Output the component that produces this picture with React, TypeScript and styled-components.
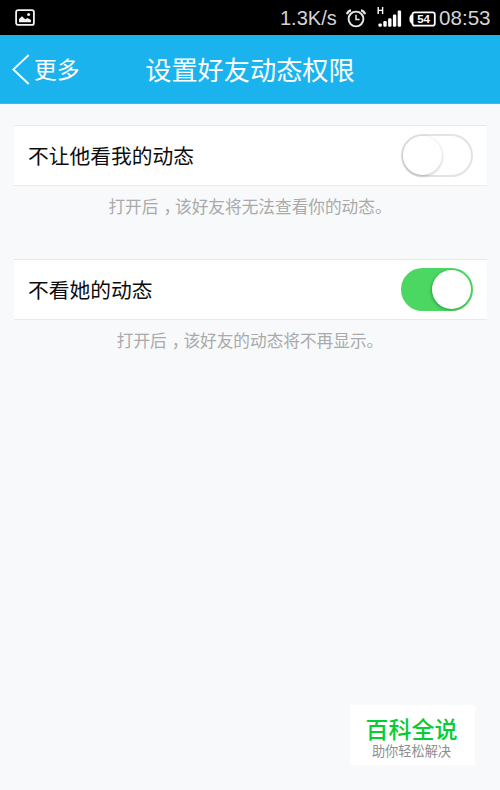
import React from 'react';
import styled, { createGlobalStyle } from 'styled-components';

const GlobalStyle = createGlobalStyle`
  * { box-sizing: border-box; }
  html, body { margin: 0; padding: 0; background: #f7f9fb; }
  body { font-family: "Noto Sans CJK SC", sans-serif; }
`;

const Screen = styled.div`
  width: 500px;
  height: 790px;
  display: flex;
  flex-direction: column;
  overflow: hidden;
  background: #f7f9fb;
`;

const StatusBar = styled.div`
  height: 35px;
  flex: none;
  display: flex;
  align-items: center;
  background: #000;
  color: #d4d4d4;
  padding: 0 8px 0 15px;

  svg { display: block; flex: none; }
`;

const StatusText = styled.span<{ $width: number; $size?: number }>`
  display: block;
  width: ${p => p.$width}px;
  padding-top: 1px;
  font: 400 ${p => p.$size ?? 20}px/32px "Liberation Sans", sans-serif;
  white-space: nowrap;
`;

const StatusGroup = styled.div`
  margin-left: auto;
  display: flex;
  align-items: center;
`;

const NavBar = styled.header`
  height: 69px;
  flex: none;
  display: grid;
  grid-template-columns: 100px 1fr 100px;
  align-items: center;
  background: #1ab3ee;
  border-bottom: 1px solid #38bbee;
  color: #fff;
`;

const BackButton = styled.button`
  display: flex;
  align-items: center;
  gap: 4px;
  padding: 0 0 0 12px;
  border: 0;
  background: none;
  color: inherit;
  font: 400 22.8px/34px "Noto Sans CJK SC", sans-serif;
  white-space: nowrap;
`;

const Title = styled.h1`
  margin: 0;
  text-align: center;
  font-size: 26.2px;
  line-height: 40px;
  font-weight: 400;
  white-space: nowrap;
`;

const Settings = styled.main`
  flex: 1;
  display: flex;
  flex-direction: column;
  gap: 31px;
  padding: 21px 13px 0 14px;
`;

const Setting = styled.section`
  height: 103px;
`;

const Row = styled.div`
  height: 61px;
  display: flex;
  align-items: center;
  justify-content: space-between;
  padding: 0 14px;
  background: #fff;
  border-top: 1px solid #e5e7e9;
  border-bottom: 1px solid #e8eaec;
`;

const Label = styled.span`
  padding-bottom: 1px;
  color: #0c0c0c;
  font-size: 20.75px;
  line-height: 30px;
`;

const Hint = styled.p`
  margin: 7px 0 0;
  padding-right: 1px;
  text-align: center;
  color: #aaa;
  font-size: 16.67px;
  line-height: 26px;
  white-space: nowrap;
`;

const Comma = styled.span`
  display: inline-block;
  width: 1em;
  padding-left: 5px;
  text-align: left;
  font-feature-settings: "halt";
`;

const Track = styled.button<{ $on: boolean }>`
  width: 72px;
  height: 43px;
  display: flex;
  align-items: center;
  justify-content: ${p => (p.$on ? 'flex-end' : 'flex-start')};
  padding: 0;
  border: 2px solid ${p => (p.$on ? '#4cd763' : '#e3e3e3')};
  border-radius: 22px;
  background: ${p => (p.$on ? '#4cd763' : '#fff')};
`;

const Thumb = styled.span<{ $on: boolean }>`
  width: 39px;
  height: 39px;
  border-radius: 50%;
  background: #fff;
  box-shadow: ${p =>
    p.$on ? '-1px 1px 3px rgba(0, 0, 0, 0.28)' : '0 1px 3px rgba(0, 0, 0, 0.26)'};
`;

const Footer = styled.footer`
  flex: none;
  display: flex;
  justify-content: flex-end;
  padding: 0 25px 25px 0;
`;

const Brand = styled.div`
  width: 125px;
  height: 60px;
  display: flex;
  flex-direction: column;
  align-items: center;
  padding: 6px 2px 0 0;
  background: #fff;
`;

const BrandName = styled.strong`
  color: #06cd33;
  font-size: 23px;
  line-height: 34px;
  font-weight: 500;
`;

const BrandTag = styled.span`
  margin-top: -3px;
  color: #8e8e8e;
  font-size: 13.2px;
  line-height: 17px;
`;

const PictureIcon = () => (
  <svg width="20" height="17" viewBox="0 0 20 17">
    <rect x="1.1" y="1.1" width="17.8" height="14.8" rx="2" fill="none" stroke="#f2f2f2" strokeWidth="1.8" />
    <path d="M4 13.2V10l3-2.8 3.2 3 2.4-1.3L16 11v2.2z" fill="#f2f2f2" />
    <circle cx="13.6" cy="5.6" r="1.5" fill="#f2f2f2" />
  </svg>
);

const AlarmIcon = () => (
  <svg width="20" height="19" viewBox="0 0 20 19" fill="none" stroke="#e8e8e8">
    <circle cx="10" cy="10" r="7.4" strokeWidth="1.9" />
    <path d="M10 5.8V10.5H13.6" strokeWidth="1.5" />
    <path d="M1 5.2Q1.8 2 5 1.4M19 5.2Q18.2 2 15 1.4" strokeWidth="2.2" />
  </svg>
);

const SignalIcon = () => (
  <svg width="26" height="21" viewBox="0 0 26 21" fill="#fff">
    <path d="M1.2 0v7M5.6 0v7M1.2 3.4h4.4" fill="none" stroke="#fff" strokeWidth="1.4" />
    <rect x="1.4" y="16.4" width="3.4" height="3.4" rx="1.2" />
    <rect x="6.3" y="14" width="3.4" height="5.8" rx="1.2" />
    <rect x="11.1" y="11.2" width="3.4" height="8.6" rx="1.2" />
    <rect x="15.9" y="7.6" width="3.4" height="12.2" rx="1.2" />
    <rect x="20.7" y="3.4" width="3.4" height="16.4" rx="1.2" />
  </svg>
);

const BatteryIcon = () => (
  <svg width="27" height="16" viewBox="0 0 27 16">
    <path d="M3 3.5H2L.5 6v4L2 12.5h1z" fill="#fff" />
    <rect x="3.5" y="1.3" width="22.3" height="13.4" rx="2.2" fill="none" stroke="#fff" strokeWidth="1.8" />
    <text x="14.6" y="12" fill="#fff" textAnchor="middle" fontFamily="Liberation Sans, sans-serif" fontWeight="700" fontSize="11.5">54</text>
  </svg>
);

const BackIcon = () => (
  <svg width="18" height="31" viewBox="0 0 18 31" fill="none" stroke="#fff" strokeWidth="1.9">
    <path d="M16.7 1L1.4 15.4 16.7 30" />
  </svg>
);

const IconSlot = styled.span<{ $left: number; $top?: number }>`
  display: block;
  margin-left: ${p => p.$left}px;
  padding-top: ${p => p.$top ?? 0}px;
`;

interface ItemProps {
  label: string;
  lead: string;
  rest: string;
  on: boolean;
}

const SettingItem = ({ label, lead, rest, on }: ItemProps) => (
  <Setting>
    <Row>
      <Label>{label}</Label>
      <Track type="button" role="switch" aria-checked={on} aria-label={label} $on={on}>
        <Thumb $on={on} />
      </Track>
    </Row>
    <Hint>{lead}<Comma>{'\uFF0C'}</Comma>{rest}</Hint>
  </Setting>
);

export default function App() {
  return (
    <>
      <GlobalStyle />
      <Screen>
        <StatusBar>
          <PictureIcon />
          <StatusGroup>
            <StatusText $width={57}>1.3K/s</StatusText>
            <IconSlot $left={9} $top={1}><AlarmIcon /></IconSlot>
            <IconSlot $left={11}><SignalIcon /></IconSlot>
            <IconSlot $left={6} $top={2}><BatteryIcon /></IconSlot>
            <IconSlot $left={3}><StatusText $width={53} $size={20.6}>08:53</StatusText></IconSlot>
          </StatusGroup>
        </StatusBar>
        <NavBar>
          <BackButton type="button"><BackIcon />更多</BackButton>
          <Title>设置好友动态权限</Title>
        </NavBar>
        <Settings>
          <SettingItem label="不让他看我的动态" lead="打开后" rest="该好友将无法查看你的动态。" on={false} />
          <SettingItem label="不看她的动态" lead="打开后" rest="该好友的动态将不再显示。" on />
        </Settings>
        <Footer>
          <Brand>
            <BrandName>百科全说</BrandName>
            <BrandTag>助你轻松解决</BrandTag>
          </Brand>
        </Footer>
      </Screen>
    </>
  );
}
